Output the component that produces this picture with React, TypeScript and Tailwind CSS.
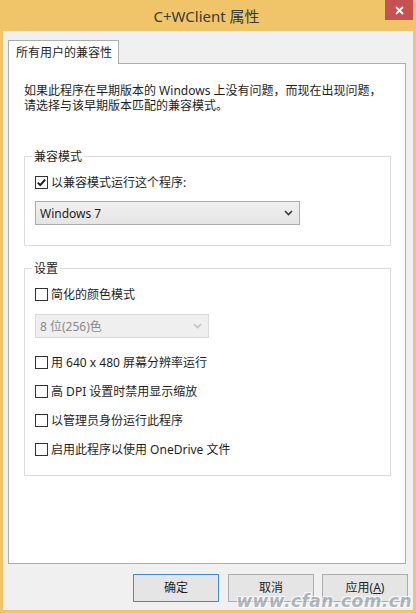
import React from "react";

const FONT = { fontFamily: '"Noto Sans", "Noto Sans CJK SC", sans-serif' };

function CheckBox({ checked, label }: { checked?: boolean; label: string }) {
  return (
    <div className="flex items-center h-[15px]">
      <svg width="13" height="13" viewBox="0 0 13 13" className="shrink-0">
        <rect x="0.5" y="0.5" width="12" height="12" fill="#ffffff" stroke="#333333" />
        {checked && (
          <path d="M2.8 6.6 L5.2 9.1 L10.2 3.6" fill="none" stroke="#1a1a1a" strokeWidth="2" />
        )}
      </svg>
      <span className="ml-[3px] text-[12px] leading-[15px] text-[#1e1e1e] whitespace-nowrap">{label}</span>
    </div>
  );
}

function Select({ value, width, disabled }: { value: string; width: string; disabled?: boolean }) {
  return (
    <div
      className={
        "h-[24px] flex items-center justify-between pl-[4px] pr-[6px] border " +
        width +
        (disabled
          ? " border-[#D9D9D9] bg-[#EFEFEF] text-[#8A8A8A]"
          : " border-[#ACACAC] bg-gradient-to-b from-[#F0F0F0] to-[#E5E5E5] text-[#1e1e1e]")
      }
    >
      <span className="text-[12px] leading-[15px] whitespace-nowrap">{value}</span>
      <svg width="9" height="6" viewBox="0 0 9 6">
        <path
          d="M1 1 L4.5 4.5 L8 1"
          fill="none"
          stroke={disabled ? "#C2C2C2" : "#3a3a3a"}
          strokeWidth="1.6"
        />
      </svg>
    </div>
  );
}

function Group({ title, children, className }: { title: string; children: React.ReactNode; className?: string }) {
  return (
    <div className={"border border-[#DCDCDC] pl-[10px] " + (className ?? "")}>
      <div className="-mt-[8px] ml-[-3px] flex">
        <span className="bg-white px-[2px] text-[12px] leading-[16px] text-[#1e1e1e]">{title}</span>
      </div>
      {children}
    </div>
  );
}

function Button({ label, primary }: { label: React.ReactNode; primary?: boolean }) {
  return (
    <div
      className={
        "w-[86px] h-[28px] flex items-center justify-center border text-[12px] text-[#1e1e1e] " +
        (primary ? "border-[#3C8CD6] bg-[#E5E5E5]" : "border-[#ACACAC] bg-[#E5E5E5]")
      }
    >
      {label}
    </div>
  );
}

export default function App() {
  return (
    <div className="w-[416px] h-[613px] bg-[#F0C56A] flex flex-col relative overflow-hidden" style={FONT}>
      {/* title bar */}
      <div className="h-[31px] flex items-start shrink-0">
        <div className="flex-1 h-[31px] flex items-center justify-center pl-[28px]">
          <span className="text-[15px] leading-[20px] text-[#3a3a3a]">C+WClient 属性</span>
        </div>
        <div className="w-[28px] h-[20px] mr-[3px] bg-[#C75050] flex items-center justify-center">
          <svg width="9" height="9" viewBox="0 0 9 9">
            <path d="M1 1 L8 8 M8 1 L1 8" stroke="#ffffff" strokeWidth="1.8" />
          </svg>
        </div>
      </div>

      {/* body */}
      <div className="flex-1 mx-[3px] mb-[3px] bg-[#F0F0F0] flex flex-col pl-[5px] pr-[5px] pt-[9px] pb-[8px]">
        {/* tab */}
        <div className="flex -mb-px relative z-10">
          <div className="h-[24px] w-[111px] bg-white border-t border-l border-r border-[#ADADAD] pl-[7px] flex items-center">
            <span className="text-[12px] leading-[15px] text-[#1e1e1e]">所有用户的兼容性</span>
          </div>
        </div>
        {/* panel */}
        <div className="flex-1 mr-[2px] bg-white border border-[#ADADAD] pl-[15px] pr-[14px] pt-[19px]">
          <p className="text-[12px] leading-[15px] text-[#1e1e1e] whitespace-nowrap">
            如果此程序在早期版本的 Windows 上没有问题，而现在出现问题，
          </p>
          <p className="text-[12px] leading-[15px] text-[#1e1e1e] whitespace-nowrap">
            请选择与该早期版本匹配的兼容模式。
          </p>

          <Group title="兼容模式" className="mt-[43px] pb-[20px]">
            <div className="mt-[10px]">
              <CheckBox checked label="以兼容模式运行这个程序:" />
            </div>
            <div className="mt-[11px]">
              <Select value="Windows 7" width="w-[265px]" />
            </div>
          </Group>

          <Group title="设置" className="mt-[22px] pb-[18px]">
            <div className="mt-[10px]">
              <CheckBox label="简化的颜色模式" />
            </div>
            <div className="mt-[12px]">
              <Select value="8 位(256)色" width="w-[174px]" disabled />
            </div>
            <div className="mt-[17px]">
              <CheckBox label="用 640 x 480 屏幕分辨率运行" />
            </div>
            <div className="mt-[14px]">
              <CheckBox label="高 DPI 设置时禁用显示缩放" />
            </div>
            <div className="mt-[14px]">
              <CheckBox label="以管理员身份运行此程序" />
            </div>
            <div className="mt-[14px]">
              <CheckBox label="启用此程序以使用 OneDrive 文件" />
            </div>
          </Group>
        </div>

        {/* buttons */}
        <div className="mt-[10px] flex justify-end">
          <Button primary label="确定" />
          <div className="ml-[9px]">
            <Button label="取消" />
          </div>
          <div className="ml-[8px]">
            <Button
              label={
                <span>
                  应用(<span className="underline">A</span>)
                </span>
              }
            />
          </div>
        </div>
      </div>

      {/* watermark overlay */}
      <div
        className="absolute right-[4px] bottom-[3px] text-[17px] italic font-bold text-[#9AA3AE] opacity-75 leading-[18px] tracking-[0.5px]"
        style={{
          fontFamily: '"DejaVu Sans", sans-serif',
          textShadow: "1px 1px 0 #ffffff, -1px -1px 0 #ffffff, 1px -1px 0 #ffffff, -1px 1px 0 #ffffff",
        }}
      >
        www.cfan.com.cn
      </div>
    </div>
  );
}
